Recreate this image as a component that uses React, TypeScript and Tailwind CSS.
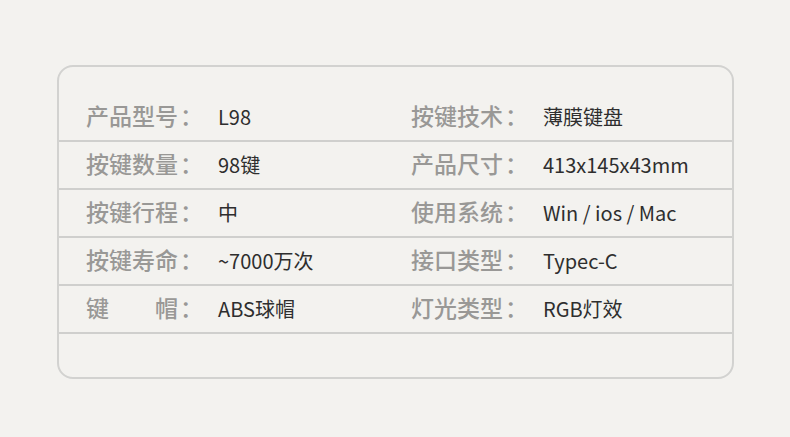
import React from "react";

type Spec = { label: string; value: string };

// rows of [left, right]
const rows: [Spec, Spec][] = [
  [{ label: "产品型号", value: "L98" }, { label: "按键技术", value: "薄膜键盘" }],
  [{ label: "按键数量", value: "98键" }, { label: "产品尺寸", value: "413x145x43mm" }],
  [{ label: "按键行程", value: "中" }, { label: "使用系统", value: "Win / ios / Mac" }],
  [{ label: "按键寿命", value: "~7000万次" }, { label: "接口类型", value: "Typec-C" }],
  [{ label: "键帽", value: "ABS球帽" }, { label: "灯光类型", value: "RGB灯效" }],
];

function Label({ text }: { text: string }) {
  // two-char labels are spread over the width of four
  if (text.length === 2) {
    return (
      <div className="flex w-[132px] shrink-0 items-baseline text-[23px] font-medium text-[#999896]">
        <div className="flex w-[92px] justify-between">
          <span>{text[0]}</span>
          <span className="mr-[-23px] w-[46px]">{text[1]}</span>
        </div>
        <span className="ml-[2px]">：</span>
      </div>
    );
  }
  return (
    <div className="w-[132px] shrink-0 text-[23px] font-medium text-[#999896]">
      {text}
      <span className="ml-[2px]">：</span>
    </div>
  );
}

function Pair({ spec, wide }: { spec: Spec; wide?: boolean }) {
  return (
    <div className={wide ? "flex w-[325px] shrink-0 items-baseline" : "flex items-baseline"}>
      <Label text={spec.label} />
      <div className="text-[20px] text-[#2e2e2e]">{spec.value}</div>
    </div>
  );
}

export default function App() {
  return (
    <div
      className="h-[437px] w-[790px] overflow-hidden bg-[#f3f2ef] pt-[65px] pl-[57px]"
      style={{ fontFamily: '"Noto Sans CJK SC", "Noto Sans", sans-serif' }}
    >
      <div className="h-[314px] w-[677px] rounded-[16px] border-2 border-[#d2d2d0] pt-[27px]">
        {rows.map(([l, r], i) => (
          <div key={i} className="flex h-[48px] items-center border-b-2 border-[#cfcfcd] px-[27px] pb-[3px] leading-none">
            <Pair spec={l} wide />
            <Pair spec={r} />
          </div>
        ))}
      </div>
    </div>
  );
}
